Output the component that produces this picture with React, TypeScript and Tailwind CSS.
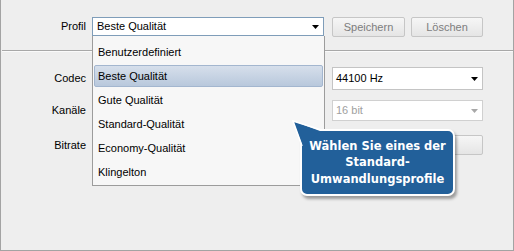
import React from "react";

const Arrow = ({ color = "#000" }: { color?: string }) => (
  <svg width="7" height="4" viewBox="0 0 7 4" className="shrink-0">
    <path d="M0 0H7L3.5 4Z" fill={color} />
  </svg>
);

const items = [
  "Benutzerdefiniert",
  "Beste Qualität",
  "Gute Qualität",
  "Standard-Qualität",
  "Economy-Qualität",
  "Klingelton",
];

export default function App() {
  return (
    <div className="relative w-[514px] h-[251px] bg-[#eeeeee] border-l border-r border-b border-[#a3a3a3] font-['Liberation_Sans',Arial,sans-serif] text-[11px] text-black overflow-hidden">
      {/* header */}
      <div className="flex h-[50px] items-start pt-[17px]">
        <div className="w-[85px] h-[19px] flex items-center justify-end">Profil</div>
        <div className="ml-[6px] w-[232px] h-[19px] border border-[#7f9db9] bg-white flex items-center justify-between pl-[4px] pr-[4px]">
          <span>Beste Qualität</span>
          <Arrow />
        </div>
        <div className="ml-[8px] w-[73px] h-[20px] rounded-[2px] border border-[#c6c6c6] bg-gradient-to-b from-[#f6f6f6] to-[#e5e5e5] flex items-center justify-center text-[#7d7d7d]">
          Speichern
        </div>
        <div className="ml-[6px] w-[72px] h-[20px] rounded-[2px] border border-[#c6c6c6] bg-gradient-to-b from-[#f6f6f6] to-[#e5e5e5] flex items-center justify-center text-[#7d7d7d]">
          Löschen
        </div>
      </div>
      <div className="h-px ml-px bg-[#a8a8a8]" />
      <div className="h-px ml-px bg-[#fafafa]" />

      {/* rows */}
      <div className="pt-[15px]">
        <div className="flex h-[23px] items-center">
          <div className="w-[85px] text-right">Codec</div>
          <div className="ml-[6px] w-[232px] h-[23px] border border-[#c4c4c4] bg-white" />
          <div className="ml-[8px] w-[151px] h-[23px] border border-[#c4c4c4] bg-white flex items-center justify-between pl-[3px] pr-[4px]">
            <span>44100 Hz</span>
            <Arrow />
          </div>
        </div>
        <div className="mt-[10px] flex h-[21px] items-center">
          <div className="w-[85px] text-right">Kanäle</div>
          <div className="ml-[6px] w-[232px] h-[21px] border border-[#c4c4c4] bg-white" />
          <div className="ml-[8px] w-[151px] h-[21px] border border-[#d0d0d0] bg-white flex items-center justify-between pl-[3px] pr-[4px] text-[#a0a0a0]">
            <span>16 bit</span>
            <Arrow color="#a8a8a8" />
          </div>
        </div>
        <div className="mt-[14px] flex h-[20px] items-center">
          <div className="w-[85px] text-right">Bitrate</div>
          <div className="ml-[6px] w-[232px] h-[20px] border border-[#c4c4c4] bg-white" />
          <div className="ml-[8px] w-[151px] h-[20px] rounded-[2px] border border-[#c6c6c6] bg-gradient-to-b from-[#f6f6f6] to-[#e5e5e5]" />
        </div>
      </div>

      {/* dropdown list */}
      <div className="absolute left-[91px] top-[36px] w-[233px] border border-t-0 border-[#9c9c9c] bg-[#f7f7f7] pt-[4px] pb-px">
        {items.map((it, i) => (
          <div key={it} className="h-[24px] px-px py-px">
            <div
              className={
                i === 1
                  ? "h-[22px] flex items-center pl-[3px] rounded-[2px] border border-[#a3b6cf] bg-gradient-to-b from-[#d6dfeb] to-[#b8c8dc]"
                  : "h-[22px] flex items-center pl-[3px] border border-transparent"
              }
            >
              {it}
            </div>
          </div>
        ))}
      </div>

      {/* tooltip */}
      <div className="absolute left-[299px] top-[129px] w-[155px] h-[67px] rounded-[7px] bg-[#22609a] border-2 border-white shadow-[2px_3px_3px_rgba(0,0,0,0.35)] flex items-center justify-center text-center text-white font-bold font-['DejaVu_Sans',sans-serif] text-[11.5px] leading-[16.5px]">
        <div>
          Wählen Sie eines der
          <br />
          Standard-
          <br />
          Umwandlungsprofile
        </div>
      </div>
      <svg className="absolute left-[287px] top-[117px]" width="40" height="40" viewBox="0 0 40 40">
        <polygon points="5,4 32,14 15,30" fill="#22609a" />
        <polyline points="32,12.6 5,4 14,29" fill="none" stroke="#ffffff" strokeWidth="1.6" />
      </svg>
    </div>
  );
}
